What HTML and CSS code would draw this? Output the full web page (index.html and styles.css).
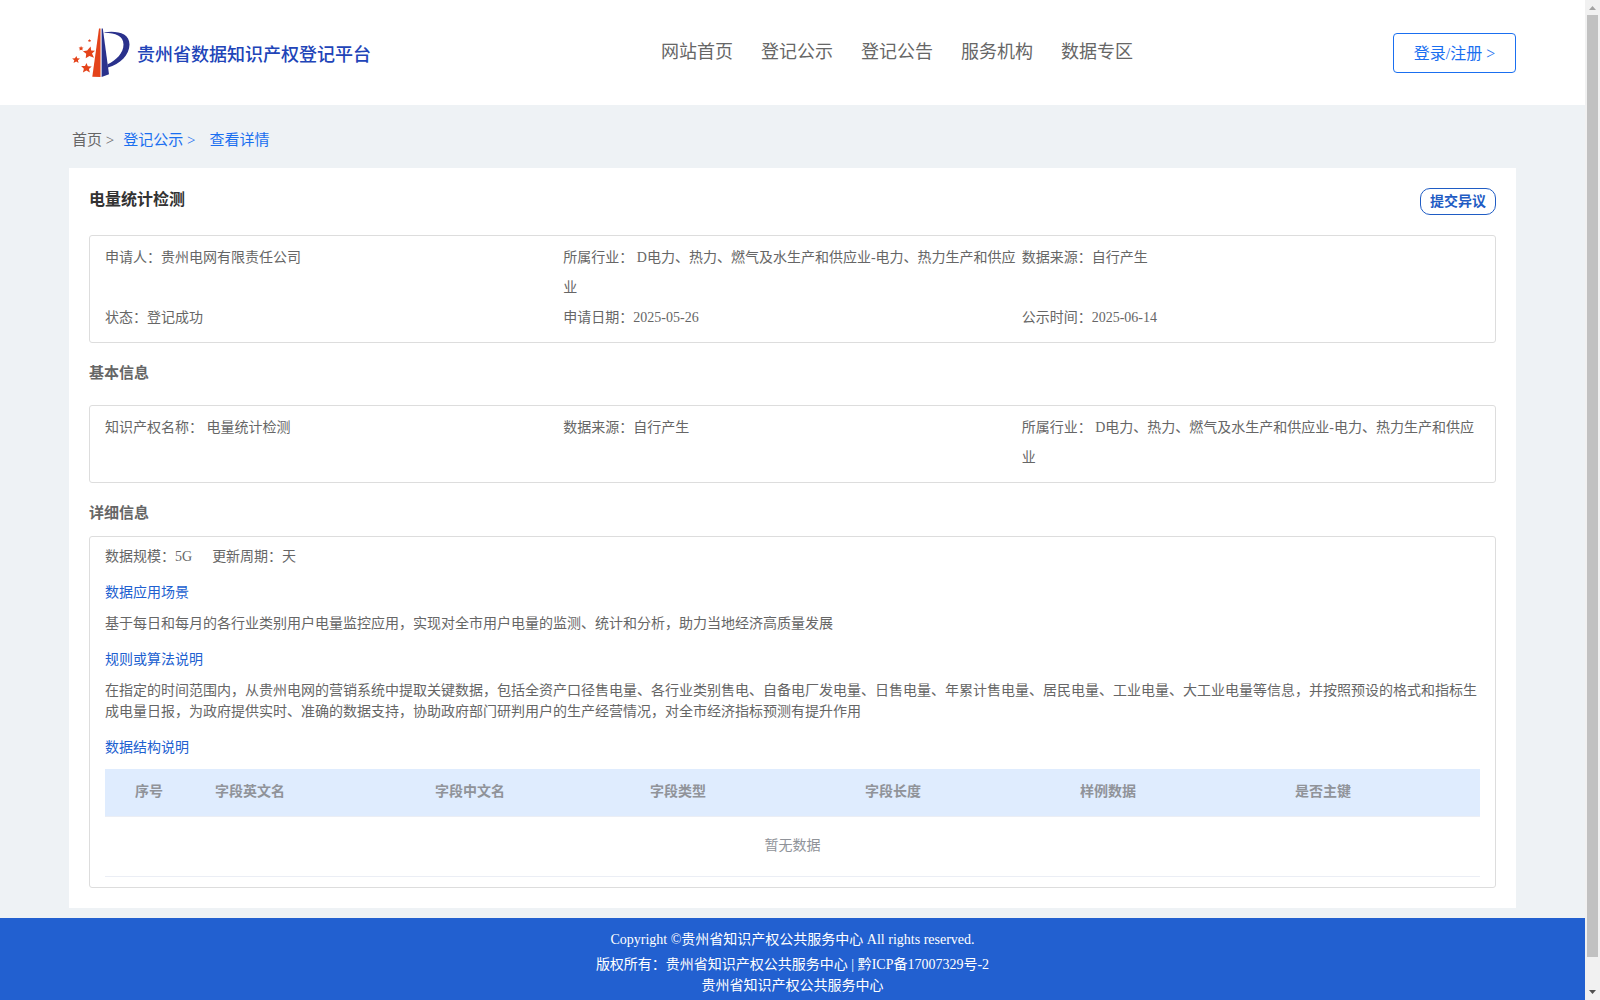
FILE: index.html
```
<!DOCTYPE html>
<html lang="zh-CN">
<head>
    <meta charset="UTF-8">
    <meta name="viewport" content="width=device-width, initial-scale=1.0">
    <title>贵州省数据知识产权登记平台</title>
    <link rel="stylesheet" href="styles.css">
</head>
<body>
    <div class="page">
        <header class="header">
            <div class="container header-inner">
                <div class="brand">
                    <svg class="logo" width="58" height="50" viewBox="0 0 58 50">
                        <path fill="#e4431a" d="M27 .5h1.500V49l-8.200-.2z"/>
                        <path fill="#2a318c" d="M29.600 .5h1.200L37 46.200 29.600 49z"/>
                        <path fill="#2a318c" d="M32.500 4.200C45 2.500 57.500 5 57.500 16.500C57.500 27 48 36 36 39.500L35.600 36.200C44 32.500 51.500 25 51.500 16.500C51.500 8 43.500 4.800 32.500 4.800z"/>
                        <g fill="#e4431a">
                            <path d="M18.600 18.600l.6 4 3.800.1-3 2.900 2 4.100-4.600-1.800-3.700 2.400.5-4.500-3.300-2.500 4.300-.9z"/>
                            <path d="M14.500 35l1.300 3.200 3.900.2-2.800 2.500 1 3.700-3.500-2-3.500 1.900 1-3.700-2.800-2.700 3.900-.1z"/>
                            <path d="M4.400 28l.8 2.200 2.800.2-2.100 1.900.7 2.800-2.400-1.500-2.700 1.500.8-2.800-2.200-1.900 2.800-.2z"/>
                            <path d="M9.100 18l.7 1.400 1.700.2-1.200 1.200.3 1.700-1.500-.8-1.600.8.300-1.700-1.200-1.200 1.700-.2z"/>
                            <path d="M17.500 11l.5 1 1.100.1-.8.800.2 1.100-1-.5-1 .5.200-1.100-.8-.8 1.100-.1z"/>
                        </g>
                    </svg>
                    <span class="brand-name">贵州省数据知识产权登记平台</span>
                </div>
                <nav class="nav">
                    <a>网站首页</a>
                    <a>登记公示</a>
                    <a>登记公告</a>
                    <a>服务机构</a>
                    <a>数据专区</a>
                </nav>
                <button class="login">登录/注册 &gt;</button>
            </div>
        </header>

        <main class="container">
            <div class="crumbs">
                <span>首页 &gt;</span>
                <a>登记公示 &gt;</a>
                <a class="current">查看详情</a>
            </div>

            <div class="card">
                <div class="card-head">
                    <h1>电量统计检测</h1>
                    <button class="objection">提交异议</button>
                </div>

                <div class="box info">
                    <div>申请人：贵州电网有限责任公司</div>
                    <div>所属行业： D电力、热力、燃气及水生产和供应业-电力、热力生产和供应业</div>
                    <div>数据来源：自行产生</div>
                    <div>状态：登记成功</div>
                    <div>申请日期：2025-05-26</div>
                    <div>公示时间：2025-06-14</div>
                </div>

                <h2 class="basic-title">基本信息</h2>
                <div class="box info">
                    <div>知识产权名称： 电量统计检测</div>
                    <div>数据来源：自行产生</div>
                    <div>所属行业： D电力、热力、燃气及水生产和供应业-电力、热力生产和供应业</div>
                </div>

                <h2 class="detail-title">详细信息</h2>
                <div class="box detail">
                    <div class="scale">
                        <span>数据规模：5G</span>
                        <span>更新周期：天</span>
                    </div>
                    <h3>数据应用场景</h3>
                    <p>基于每日和每月的各行业类别用户电量监控应用，实现对全市用户电量的监测、统计和分析，助力当地经济高质量发展</p>
                    <h3>规则或算法说明</h3>
                    <p>在指定的时间范围内，从贵州电网的营销系统中提取关键数据，包括全资产口径售电量、各行业类别售电、自备电厂发电量、日售电量、年累计售电量、居民电量、工业电量、大工业电量等信息，并按照预设的格式和指标生成电量日报，为政府提供实时、准确的数据支持，协助政府部门研判用户的生产经营情况，对全市经济指标预测有提升作用</p>
                    <h3>数据结构说明</h3>
                    <table class="fields">
                        <colgroup>
                            <col class="col-index">
                            <col class="col-english">
                            <col class="col-field">
                            <col class="col-field">
                            <col class="col-field">
                            <col class="col-field">
                            <col>
                        </colgroup>
                        <thead>
                            <tr>
                                <th class="index">序号</th>
                                <th>字段英文名</th>
                                <th>字段中文名</th>
                                <th>字段类型</th>
                                <th>字段长度</th>
                                <th>样例数据</th>
                                <th>是否主键</th>
                            </tr>
                        </thead>
                        <tbody>
                            <tr>
                                <td colspan="7">暂无数据</td>
                            </tr>
                        </tbody>
                    </table>
                </div>
            </div>
        </main>

        <footer class="footer">
            <p class="copyright">Copyright ©贵州省知识产权公共服务中心 All rights reserved.</p>
            <p>版权所有：贵州省知识产权公共服务中心 | 黔ICP备17007329号-2</p>
            <p>贵州省知识产权公共服务中心</p>
        </footer>
    </div>

    <div class="scrollbar">
        <svg width="15" height="15" viewBox="0 0 15 15"><path fill="#a3a3a3" d="M4 10h7L7.500 6z"/></svg>
        <div class="thumb"></div>
        <svg class="down" width="15" height="15" viewBox="0 0 15 15"><path fill="#505050" d="M4 5h7L7.500 9z"/></svg>
    </div>
</body>
</html>
```
FILE: styles.css
```
* {
    box-sizing: border-box;
}

body {
    margin: 0;
    height: 100vh;
    overflow: hidden;
    background: #eef2f5;
    color: #666;
    font-family: "Liberation Serif", "Noto Sans CJK SC", serif;
    font-size: 14px;
}

h1, h2, h3, p {
    margin: 0;
}

button {
    background: #fff;
    font-family: inherit;
    padding: 0;
    cursor: pointer;
}

.page {
    width: 1585px;
}

.container {
    width: 1447px;
    margin: 0 auto;
}

.header {
    background: #fff;
    height: 105px;
}

.header-inner {
    display: grid;
    grid-template-columns: 592px 1fr 123px;
    align-items: start;
}

.brand {
    display: flex;
    padding: 28px 0 0 3px;
}

.brand-name {
    margin-left: 7px;
    line-height: 54px;
    font-size: 18px;
    font-weight: 500;
    color: #2144b8;
}

.nav {
    display: flex;
    gap: 28px;
    padding-top: 37px;
    font-size: 18px;
    line-height: 30px;
}

.login {
    height: 40px;
    margin-top: 33px;
    padding-bottom: 2px;
    border: 1px solid #1a6ff0;
    border-radius: 4px;
    color: #1a6ff0;
    font-size: 16px;
}

.crumbs {
    display: flex;
    height: 63px;
    padding: 20px 0 0 3px;
    font-size: 15px;
    line-height: 31px;
}

.crumbs a {
    margin-left: 9px;
    color: #1a6ff0;
}

.crumbs .current {
    margin-left: 14px;
}

.card {
    height: 740px;
    padding: 20px;
    background: #fff;
}

.card-head {
    display: flex;
    justify-content: space-between;
    align-items: flex-start;
    height: 47px;
}

.card-head h1 {
    font-size: 16px;
    line-height: 24px;
    color: #333;
}

.objection {
    width: 76px;
    height: 27px;
    border: 1px solid #1f5cc4;
    border-radius: 10px;
    color: #1f5cc4;
    font-size: 14px;
    font-weight: bold;
    line-height: 23px;
}

.box {
    border: 1px solid #ddd;
    border-radius: 3px;
    padding: 7px 15px 9px;
}

.info {
    display: grid;
    grid-template-columns: repeat(3, 1fr);
    line-height: 30px;
}

h2 {
    font-size: 15px;
    line-height: 30px;
}

.basic-title {
    padding: 15px 0 17px;
}

.detail-title {
    padding: 15px 0 8px;
}

.detail {
    height: 352px;
    padding: 9px 15px;
    line-height: 21px;
}

.scale {
    display: flex;
    gap: 20px;
}

h3 {
    margin: 15px 0 10px;
    font-size: 14px;
    font-weight: normal;
    color: #2060d0;
}

.fields {
    width: 100%;
    margin-top: 11px;
    border-collapse: collapse;
    table-layout: fixed;
}

.col-index {
    width: 110px;
}

.col-english {
    width: 220px;
}

.col-field {
    width: 215px;
}

.fields th {
    height: 47px;
    padding: 0 0 1px;
    background: #dfecfe;
    border-bottom: 1px solid #ebeef5;
    color: #909399;
    text-align: left;
}

.fields th.index {
    padding-left: 30px;
}

.fields td {
    height: 60px;
    padding: 0 0 2px;
    border-bottom: 1px solid #ebeef5;
    color: #909399;
    text-align: center;
}

.footer {
    height: 120px;
    margin-top: 10px;
    padding-top: 11px;
    background: #2260d0;
    color: #fff;
    text-align: center;
    line-height: 21px;
}

.footer .copyright {
    margin-bottom: 4px;
}

.scrollbar {
    position: fixed;
    top: 0;
    right: 0;
    width: 15px;
    height: 100vh;
    display: flex;
    flex-direction: column;
    background: #f1f1f1;
}

.thumb {
    width: 11px;
    height: 942px;
    margin-left: 2px;
    background: #c1c1c1;
}

.down {
    margin-top: auto;
}
```
